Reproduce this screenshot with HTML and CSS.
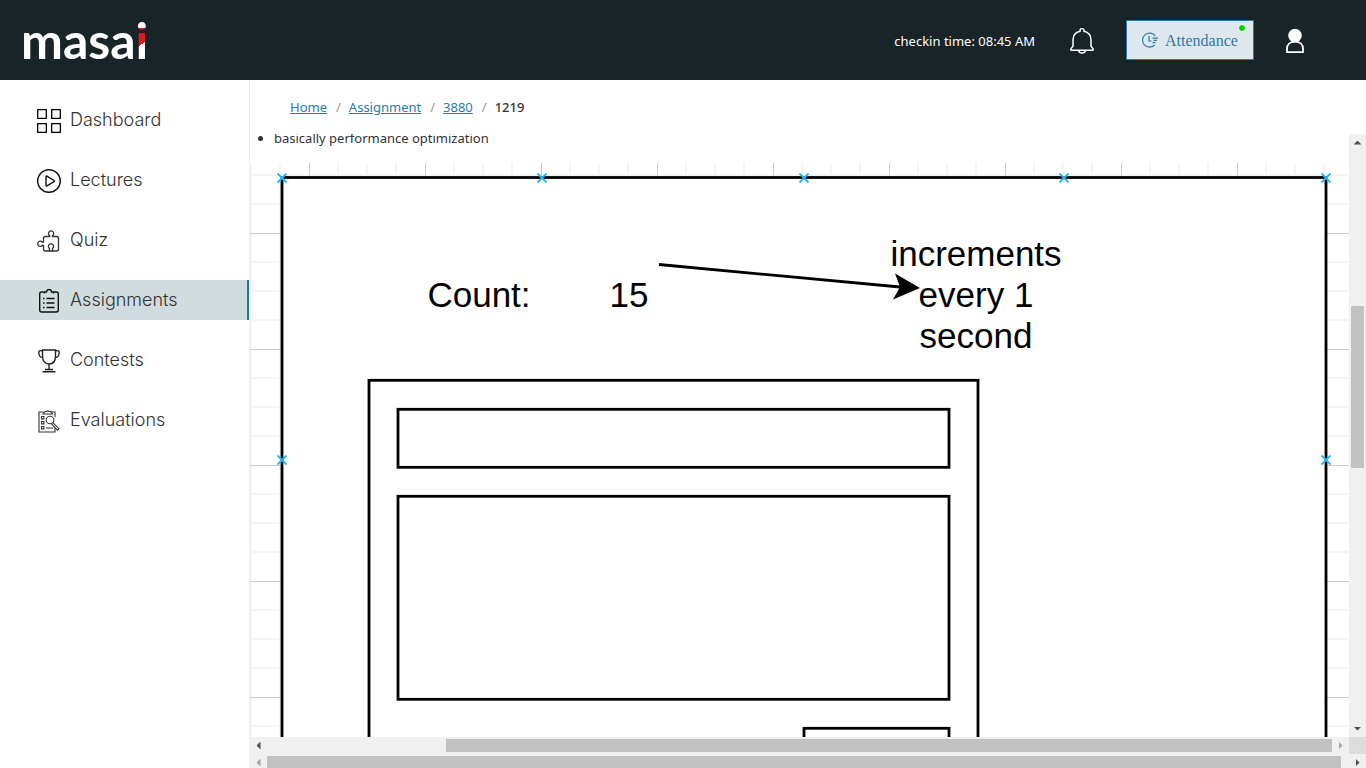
FILE: index.html
```html
<!DOCTYPE html>
<html lang="en">
<head>
<meta charset="utf-8">
<meta name="viewport" content="width=device-width, initial-scale=1">
<title>masai - Assignment 1219</title>
<link rel="stylesheet" href="styles.css">
</head>
<body>
<header class="topbar">
  <a class="logo" href="#">masa<span class="logo-i">i</span></a>
  <div class="tools">
    <span class="checkin">checkin time: 08:45 AM</span>
    <button class="icon-btn" aria-label="Notifications">
      <svg width="24" height="26" viewBox="0 0 24 26" fill="none" stroke="#fff" stroke-width="1.5"><path d="M10 3.300V2.600a2 2 0 0 1 4 0v.7c4.400 1 7 4.200 7 8.700v6.200l1.800 2.200c.9 1.200.2 1.900-.8 1.900H2c-1 0-1.700-.7-.8-1.900L3 18.200V12c0-4.500 2.600-7.700 7-8.700ZM8.500 22.600c.5 1.700 1.700 2.500 3.500 2.500s3-.8 3.500-2.500"/></svg>
    </button>
    <button class="attendance">
      <svg width="16" height="16" viewBox="0 0 16 16" fill="none" stroke="currentColor" stroke-width="1.200"><path d="M13.300 4A7 7 0 1 0 12.600 13M7 4v5h2.500M10.500 6.200H16M11.500 8.400H15M10.500 10.600h3"/></svg>
      <span>Attendance</span>
      <i class="dot"></i>
    </button>
    <button class="icon-btn" aria-label="Profile">
      <svg width="18" height="26" viewBox="0 0 18 26"><circle cx="9" cy="7.500" r="6.800" fill="#fff"/><path d="M1 24.200v-3.500c0-4 3-7 8-7s8 3 8 7v3.500Z" fill="#192429" stroke="#fff" stroke-width="1.800"/><path d="M5.500 12h7v2.200h-7z" fill="#fff"/></svg>
    </button>
  </div>
</header>
<div class="layout">
  <nav class="sidebar">
    <a class="item" href="#"><svg width="24" height="24" viewBox="0 0 24 24" fill="none" stroke="#000" stroke-width="1.300"><path d="M.7.7h8.600v8.600H.7zM14.700.7h8.600v8.600h-8.600zM.7 14.700h8.600v8.600H.7zM14.700 14.700h8.600v8.600h-8.600z"/></svg><span>Dashboard</span></a>
    <a class="item" href="#"><svg width="24" height="24" viewBox="0 0 24 24" fill="none" stroke="#111" stroke-width="1.400" stroke-linejoin="round"><circle cx="12" cy="12" r="11.300"/><path d="M9 7.600v8.800c0 .6.500.8 1 .5l7-4.300c.5-.3.500-.8 0-1.100l-7-4.400c-.5-.3-1-.1-1 .5Z"/></svg><span>Lectures</span></a>
    <a class="item" href="#"><svg width="24" height="24" viewBox="0 0 24 24" fill="none" stroke="#333" stroke-width="1.300"><path d="M6.500 13V9.500c0-1.300.7-2 2-2h4.200v-.8a2.600 2.600 0 1 1 2.800 0v.8H19.500c1.300 0 2 .7 2 2V20c0 1.300-.7 2-2 2h-4v-2.500a2.600 2.600 0 1 0-3 0V22h-4c-1.300 0-2-.7-2-2v-3.500H5.300a2.600 2.600 0 1 1 0-3.500h1.200ZM12 22h4"/></svg><span>Quiz</span></a>
    <a class="item active" href="#"><svg width="24" height="24" viewBox="0 0 24 24" fill="none" stroke="#111" stroke-width="1.400"><path d="M7.500 3H4.700C3.400 3 2.700 3.700 2.700 5v16c0 1.300.7 2 2 2h14.600c1.300 0 2-.7 2-2V5c0-1.300-.7-2-2-2h-2.800M7.500 4.500V3h2a2.500 2.500 0 0 1 5 0h2v1.500M9.500 9.500h8M9.500 14h8M9.500 18.500h8M6 9.500h1.500M6 14h1.500M6 18.500h1.500"/></svg><span>Assignments</span></a>
    <a class="item" href="#"><svg width="24" height="24" viewBox="0 0 24 24" fill="none" stroke="#222" stroke-width="1.400"><path d="M5.500 1h13v6c0 5-2.600 8-6.500 8S5.500 12 5.500 7ZM5.500 2c-2.500-.8-4-.1-3.700 2 .3 2.700 1.900 4.600 4 4.500M18.500 2c2.500-.8 4-.1 3.700 2-.3 2.700-1.900 4.600-4 4.500M12 15v5.500M8 20.500h8M5.500 22.800h13"/></svg><span>Contests</span></a>
    <a class="item" href="#"><svg width="24" height="24" viewBox="0 0 24 24" fill="none" stroke="#333" stroke-width="1.100"><path d="M6.500 3H2v20h16v-4M14 3h4v5M6 5l2-2.500h1.500a1.500 1.500 0 0 1 2.500 0h1.500l2 2.500ZM4.500 7.500h2.400v2.400H4.500zM4.500 12.500h2.400v2.400H4.500zM4.500 17.500h2.400v2.400H4.500zM9 19h7"/><circle cx="13" cy="11" r="3.800"/><path d="m15.700 13.700 6.300 6-1.500 1.500-6-6.300"/></svg><span>Evaluations</span></a>
  </nav>
  <main class="main">
    <nav class="crumbs" aria-label="Breadcrumb">
      <a href="#">Home</a><span class="sep">/</span><a href="#">Assignment</a><span class="sep">/</span><a href="#">3880</a><span class="sep">/</span><span class="current">1219</span>
    </nav>
    <div class="viewer">
      <div class="content">
        <ul class="notes"><li>basically performance optimization</li></ul>
        <svg class="diagram" width="1160" height="600" viewBox="0 0 1160 600" role="img" aria-label="Counter wireframe">
          <defs>
            <pattern id="grid" x="59" y="70" width="116" height="116" patternUnits="userSpaceOnUse">
              <path d="M29 0v116M58 0v116M87 0v116M0 29h116M0 58h116M0 87h116" stroke="#f5f5f5" stroke-width="2"/>
              <path d="M.5 0v116M0 .5h116" stroke="#ccc"/>
            </pattern>
            <path id="handle" d="m-4.500-4.500 9 9m0-9-9 9" stroke="#29b6f2" stroke-width="1.800"/>
          </defs>
          <rect width="1160" height="600" fill="url(#grid)"/>
          <g fill="#fff" stroke="#000" stroke-width="2.800">
            <rect x="32" y="14.500" width="1044" height="640"/>
            <rect x="119" y="217.300" width="609" height="450"/>
            <rect x="148" y="246.300" width="551" height="58"/>
            <rect x="148" y="333.300" width="551" height="203"/>
            <rect x="554" y="565.300" width="145" height="58"/>
          </g>
          <path d="m409 101.500 241 22.500" stroke="#000" stroke-width="2.800"/>
          <path d="m670 125-27 11.500 7-12.500-5-13.500Z"/>
          <g class="label" text-anchor="middle">
            <text x="229" y="144">Count:</text>
            <text x="379" y="144">15</text>
            <text x="726" y="103">increments</text>
            <text x="726" y="144">every 1</text>
            <text x="726" y="185">second</text>
          </g>
          <use href="#handle" x="32" y="15"/><use href="#handle" x="292" y="15"/><use href="#handle" x="554" y="15"/><use href="#handle" x="814" y="15"/><use href="#handle" x="1076" y="15"/>
          <use href="#handle" x="32" y="297"/><use href="#handle" x="1076" y="297"/>
        </svg>
      </div>
      <div class="scroll vertical"><i class="arrow up"></i><div class="track"><div class="thumb"></div></div><i class="arrow down"></i></div>
      <div class="scroll inner"><i class="arrow left"></i><div class="track"><div class="thumb"></div></div><i class="arrow right faded"></i></div>
      <div class="corner"></div>
    </div>
    <div class="scroll outer"><i class="arrow left faded"></i><div class="track"><div class="thumb"></div></div><i class="arrow right"></i></div>
  </main>
</div>
</body>
</html>
```
FILE: styles.css
```css
* { box-sizing: border-box; }
body {
  margin: 0;
  height: 100vh;
  overflow: hidden;
  display: flex;
  flex-direction: column;
  background: #fff;
  font-family: "Noto Sans", "Open Sans", sans-serif;
}
button { font: inherit; border: 0; padding: 0; background: none; cursor: pointer; }
.topbar {
  flex: none;
  height: 80px;
  padding: 0 62px 0 21px;
  background: #192429;
  display: flex;
  align-items: center;
  justify-content: space-between;
}
.logo {
  font: 700 50px/56px Lato, sans-serif;
  color: #fff;
  text-decoration: none;
}
.logo-i {
  color: transparent;
  background:
    linear-gradient(#fff, #fff) 0 0 / 100% 18px no-repeat,
    linear-gradient(145deg, #dc1a22 56%, #fff 56%);
  -webkit-background-clip: text;
  background-clip: text;
}
.tools { display: flex; align-items: center; color: #fff; padding-top: 2px; }
.checkin { font-size: 13px; margin-right: 35px; }
.icon-btn { display: flex; }
.attendance {
  position: relative;
  margin: -3px 32px 0;
  width: 128px;
  height: 40px;
  border: 1px solid #2b7ba8;
  background: #dfe7ee;
  color: #2f7aa3;
  display: flex;
  align-items: center;
  justify-content: center;
  gap: 7px;
  font: 16px "Liberation Serif", serif;
}
.attendance span { padding-top: 2px; }
.dot {
  position: absolute;
  top: 3px;
  right: 7px;
  width: 8px;
  height: 8px;
  border: 1px solid #fff;
  border-radius: 50%;
  background: #00d000;
}
.layout { flex: 1; min-height: 0; display: flex; }
.sidebar {
  flex: none;
  width: 250px;
  padding-top: 20px;
  border-right: 1px solid #ededf5;
  display: flex;
  flex-direction: column;
  gap: 20px;
}
.item {
  height: 40px;
  padding-top: 2px;
  padding-left: 37px;
  display: flex;
  align-items: center;
  gap: 9px;
  font: 300 18px/34px Inter, sans-serif;
  color: #333;
  text-decoration: none;
}
.item span { padding-bottom: 3px; }
.active { background: #d0dcdd; border-right: 2px solid #2177a3; }
.main { flex: 1; min-width: 0; display: flex; flex-direction: column; }
.crumbs {
  flex: none;
  height: 54px;
  padding-left: 40px;
  display: flex;
  align-items: center;
  font-size: 13px;
}
.crumbs a { color: #2b7ba8; }
.sep { margin: 0 8px 0 9px; color: #999; }
.current { color: #333; font-weight: 500; }
.viewer {
  flex: 1;
  min-height: 0;
  display: grid;
  grid-template: minmax(0, 1fr) 17px / minmax(0, 1fr) 17px;
}
.content { overflow: hidden; }
.notes {
  margin: -6px 0 14px;
  padding-left: 24px;
  font-size: 13px;
  line-height: 21px;
  color: #333;
}
.diagram { display: block; }
.label { font: 35px "Liberation Sans", Arial, sans-serif; fill: #000; }
.scroll { background: #f0f0f0; display: flex; align-items: center; }
.vertical { flex-direction: column; }
.track { flex: 1; display: flex; }
.thumb { background: #c1c1c1; }
.vertical .track { width: 13px; flex-direction: column; }
.vertical .thumb { height: 28.5%; margin-top: 155px; }
.inner .track, .outer .track { height: 13px; }
.inner .thumb { flex: 1; margin-left: 16.8%; }
.outer { flex: none; height: 17px; margin-bottom: -3px; }
.outer .thumb { flex: 1; margin-right: 8px; }
.corner { background: #dcdcdc; }
.arrow { flex: none; width: 17px; height: 17px; display: flex; }
.arrow::before {
  content: "";
  margin: auto;
  width: 8px;
  height: 4px;
  background: #505050;
  clip-path: polygon(50% 0, 100% 100%, 0 100%);
}
.down::before { clip-path: polygon(0 0, 100% 0, 50% 100%); }
.left::before, .right::before { width: 4px; height: 8px; }
.left::before { clip-path: polygon(0 50%, 100% 0, 100% 100%); }
.right::before { clip-path: polygon(0 0, 100% 50%, 0 100%); }
.faded::before { background: #a3a3a3; }
```
